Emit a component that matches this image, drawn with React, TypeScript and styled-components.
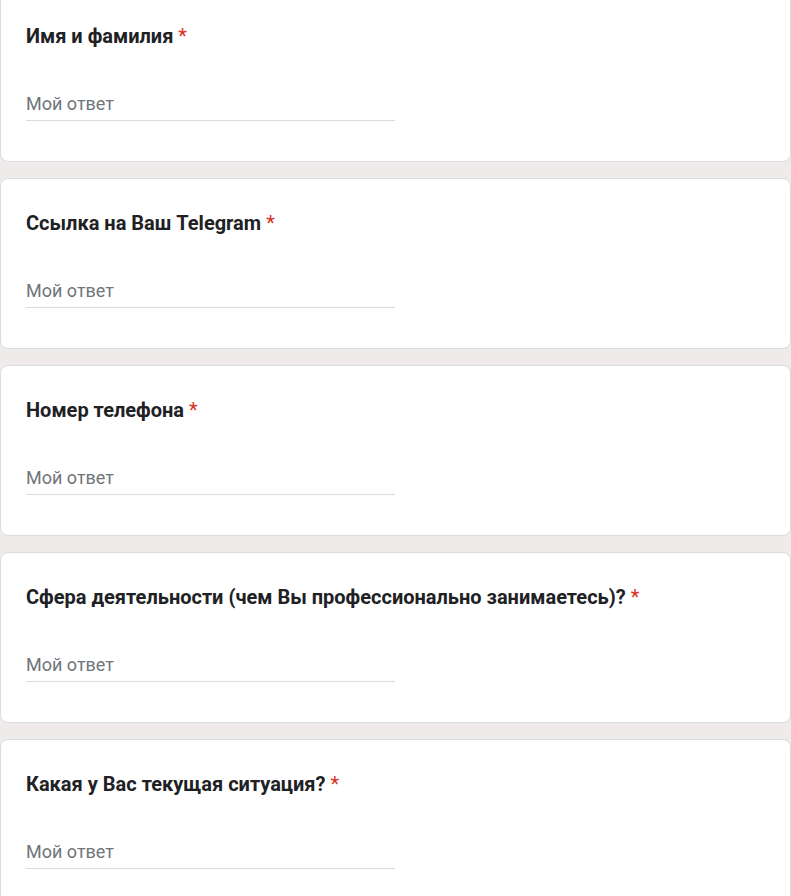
import React from "react";
import styled, { createGlobalStyle } from "styled-components";

const GlobalStyle = createGlobalStyle`
  html, body {
    margin: 0;
    padding: 0;
    background: #f0ebeb;
    font-family: Roboto, "Noto Sans", Arial, sans-serif;
  }
`;

const FormList = styled.div`
  display: flex;
  flex-direction: column;
  gap: 16px;
  margin-top: -9px;
`;

const Card = styled.div`
  background: #fff;
  border: 1px solid #dadce0;
  border-radius: 8px;
  padding: 32px 24px 40px 25px;
`;

const Title = styled.div`
  font-size: 20px;
  font-weight: 700;
  line-height: 24px;
  color: #202124;
`;

const Required = styled.span`
  color: #d93025;
  font-weight: 400;
  margin-left: 5px;
`;

const AnswerField = styled.div`
  margin-top: 44px;
  width: 369px;
  padding-bottom: 4px;
  border-bottom: 1px solid #dadce0;
  font-size: 18px;
  line-height: 24px;
  color: #70757a;
`;

const questions = [
  "Имя и фамилия",
  "Ссылка на Ваш Telegram",
  "Номер телефона",
  "Сфера деятельности (чем Вы профессионально занимаетесь)?",
  "Какая у Вас текущая ситуация?",
];

const App = () => {
  return (
    <>
      <GlobalStyle />
      <FormList>
        {questions.map((q) => (
          <Card key={q}>
            <Title>
              {q}
              <Required>*</Required>
            </Title>
            <AnswerField>Мой ответ</AnswerField>
          </Card>
        ))}
      </FormList>
    </>
  );
};

export default App;
